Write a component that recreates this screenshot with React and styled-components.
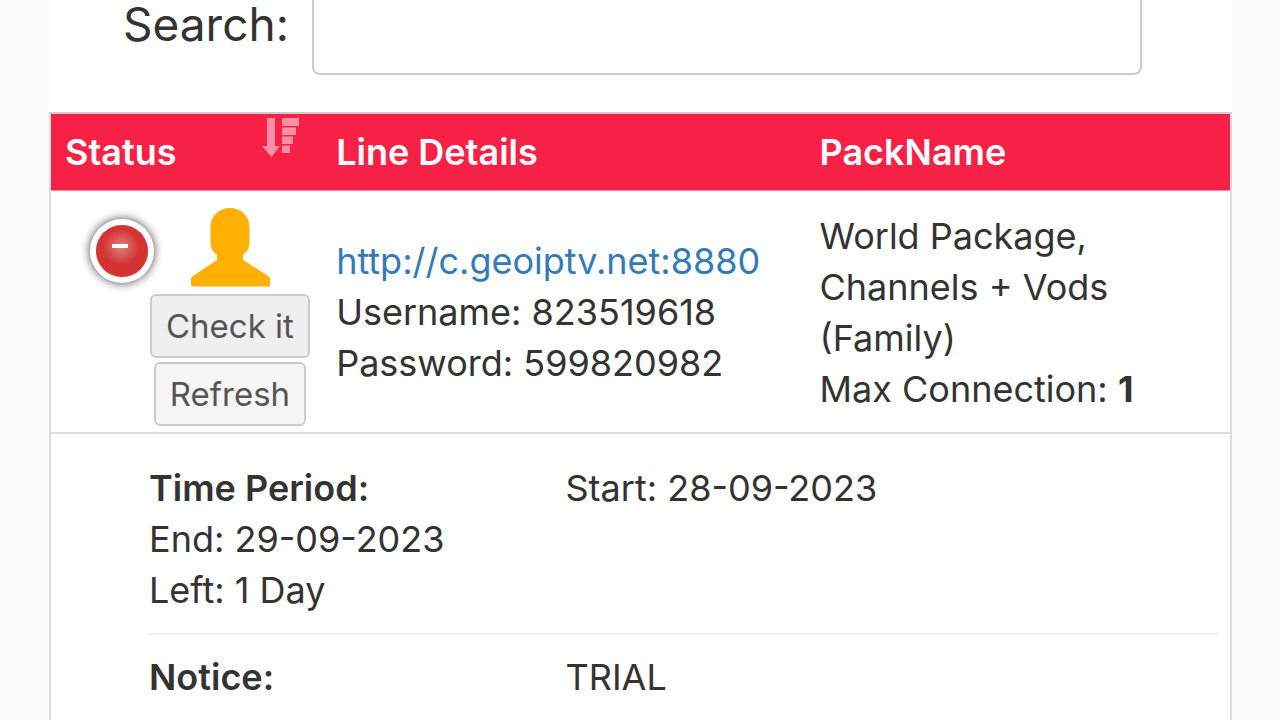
import React, { Component } from 'react';
import styled, { createGlobalStyle } from 'styled-components';

const line = {
    url: "http://c.geoiptv.net:8880",
    username: "823519618",
    password: "599820982",
    packName: "World Package, Channels + Vods (Family)",
    maxConnection: 1
};

export default class App extends Component {
    state = {
        search: "",
        open: true
    }
    handleChange = (e) => {
        this.setState({ search: e.target.value });
    }
    toggleDetails = () => {
        this.setState({ open: !this.state.open });
    }

    render() {
        return (
            <Page>
                <GlobalStyle />
                <Panel>
                    <SearchBar>
                        <SearchLabel htmlFor="search">Search:</SearchLabel>
                        <SearchInput type="search" id="search" value={this.state.search} onChange={this.handleChange} />
                    </SearchBar>

                    <Table>
                        <colgroup>
                            <Col $width="23%" />
                            <Col $width="41%" />
                            <Col $width="36%" />
                        </colgroup>
                        <thead>
                            <tr>
                                <HeadCell>Status<SortIcon /></HeadCell>
                                <HeadCell>Line Details</HeadCell>
                                <HeadCell>PackName</HeadCell>
                            </tr>
                        </thead>
                        <tbody>
                            <tr>
                                <StatusCell>
                                    <StatusLayout>
                                        <ToggleButton type="button" aria-label="Toggle details" aria-expanded={this.state.open} onClick={this.toggleDetails}>
                                            <ToggleMark $open={this.state.open} />
                                        </ToggleButton>
                                        <Actions>
                                            <UserIcon />
                                            <ActionButton type="button" $background="#efefef">Check it</ActionButton>
                                            <ActionButton type="button" $background="#f5f5f5">Refresh</ActionButton>
                                        </Actions>
                                    </StatusLayout>
                                </StatusCell>
                                <Cell>
                                    <LineLink href={line.url}>{line.url}</LineLink>
                                    <br />
                                    Username: {line.username}
                                    <br />
                                    Password: {line.password}
                                </Cell>
                                <Cell>
                                    {line.packName}
                                    <br />
                                    Max Connection: <b>{line.maxConnection}</b>
                                </Cell>
                            </tr>
                            {this.state.open &&
                            <tr>
                                <DetailsCell colSpan="3">
                                    <DetailsList>
                                        <DetailsItem>
                                            <DetailsTitle>Time Period:</DetailsTitle>
                                            <span>Start: 28-09-2023</span>
                                            <DetailsLine>End: 29-09-2023</DetailsLine>
                                            <DetailsLine>Left: 1 Day</DetailsLine>
                                        </DetailsItem>
                                        <DetailsItem>
                                            <DetailsTitle>Notice:</DetailsTitle>
                                            <span>TRIAL</span>
                                        </DetailsItem>
                                    </DetailsList>
                                </DetailsCell>
                            </tr>}
                        </tbody>
                    </Table>
                </Panel>
            </Page>
        )
    }
}

function SortIcon() {
    return (
        <SortSvg viewBox="0 0 38 40" aria-hidden="true">
            <path d="M5 0h8v28h5l-8.500 11L0 28h5zM20 0h17v8H20zM20 9.500h14v7.500H20zM20 18.500h11v7.500H20zM20 27.500h8v7.500H20z" />
        </SortSvg>
    )
}

function UserIcon() {
    return (
        <UserSvg viewBox="0 0 80 80" aria-hidden="true">
            <path d="M40 1C51 1 59.500 9 59.500 20V35C59.500 41 57 45.500 53 47.500V53L78 69C79.300 70 80 71 80 72.500V78Q80 79.500 78.500 79.500H2.500Q1 79.500 1 78V72.500C1 71 1.700 70 3 69L27 53V47.500C23 45.500 20.500 41 20.500 35V20C20.500 9 29 1 40 1Z" />
        </UserSvg>
    )
}

const GlobalStyle = createGlobalStyle`
    * {
        box-sizing: border-box;
    }
    html {
        scrollbar-width: none;
    }
    body {
        margin: 0;
        color: #333;
        background: #fbfbfb;
        font-family: Inter, "Liberation Sans", sans-serif;
        font-size: 36px;
        line-height: 51px;
    }
`

const Page = styled.div`
    min-height: 100vh;
    padding: 0 48px 0 49px;
`

const Panel = styled.main`
    min-height: 100vh;
    background: #fff;
`

const SearchBar = styled.div`
    display: flex;
    gap: 20px;
    padding: 0 90px 0 74px;
    margin-bottom: 37px;
`

const SearchLabel = styled.label`
    min-width: 169px;
    font-size: 46px;
    line-height: 48px;
`

const SearchInput = styled.input`
    flex: 1;
    min-width: 0;
    height: 75px;
    padding: 0 20px;
    border: 2px solid #ccc;
    border-top: none;
    border-radius: 0 0 8px 8px;
    outline: none;
    background: #fff;
    color: #333;
    font: inherit;
`

const Table = styled.table`
    width: 100%;
    table-layout: fixed;
    border-collapse: separate;
    border-spacing: 0;
    border: 2px solid #ddd;
    border-top-color: #ccc;
    border-bottom: none;
`

const Col = styled.col`
    width: ${props => props.$width};
`

const HeadCell = styled.th`
    position: relative;
    height: 77px;
    padding: 0 14px;
    border-bottom: 1px solid #fa8ba0;
    background: #f72148;
    color: #fff;
    text-align: left;
    font-weight: 600;
`

const SortSvg = styled.svg`
    position: absolute;
    top: 4px;
    right: 22px;
    width: 38px;
    height: 40px;
    fill: #fb90a4;
`

const Cell = styled.td`
    padding: 16px 14px 14px;
    border-bottom: 2px solid #ddd;
    vertical-align: middle;
`

const StatusCell = styled(Cell)`
    padding: 16px 13px 6px 43px;
`

const StatusLayout = styled.div`
    display: grid;
    grid-template-columns: 56px 1fr;
`

const ToggleButton = styled.button`
    display: flex;
    justify-content: center;
    align-items: center;
    justify-self: center;
    width: 52px;
    height: 52px;
    margin-top: 18px;
    padding: 0;
    border: none;
    border-radius: 50%;
    box-shadow: 0 0 0 6px #fff, 0 0 8px 7px #666;
    background: radial-gradient(circle at 48% 42%, #e08080 0, #d33333 45%);
    cursor: pointer;
`

const ToggleMark = styled.span`
    width: 16px;
    height: ${props => props.$open ? "4px" : "16px"};
    margin: 0 4px 10px 0;
    background: #fff;
`

const Actions = styled.div`
    display: flex;
    flex-direction: column;
    align-items: center;
    gap: 4px;
`

const UserSvg = styled.svg`
    width: 80px;
    height: 80px;
    margin-bottom: 3px;
    fill: #ffb000;
`

const ActionButton = styled.button`
    height: 64px;
    padding: 0 14px;
    border: 2px solid #ccc;
    border-radius: 6px;
    background: ${props => props.$background};
    color: #555;
    font-family: inherit;
    font-size: 33px;
    line-height: 48px;
    white-space: nowrap;
    cursor: pointer;
`

const LineLink = styled.a`
    color: #337ab7;
    text-decoration: none;
`

const DetailsCell = styled.td`
    padding: 12px 13px 0 98px;
`

const DetailsList = styled.ul`
    margin: 0;
    padding: 0;
    list-style: none;
`

const DetailsItem = styled.li`
    display: grid;
    grid-template-columns: 39% 1fr;
    padding: 17px 0;
    border-bottom: 2px solid #efefef;

    &:last-child {
        border-bottom: none;
    }
`

const DetailsTitle = styled.span`
    font-weight: 600;
`

const DetailsLine = styled.span`
    grid-column: 1 / -1;
`
